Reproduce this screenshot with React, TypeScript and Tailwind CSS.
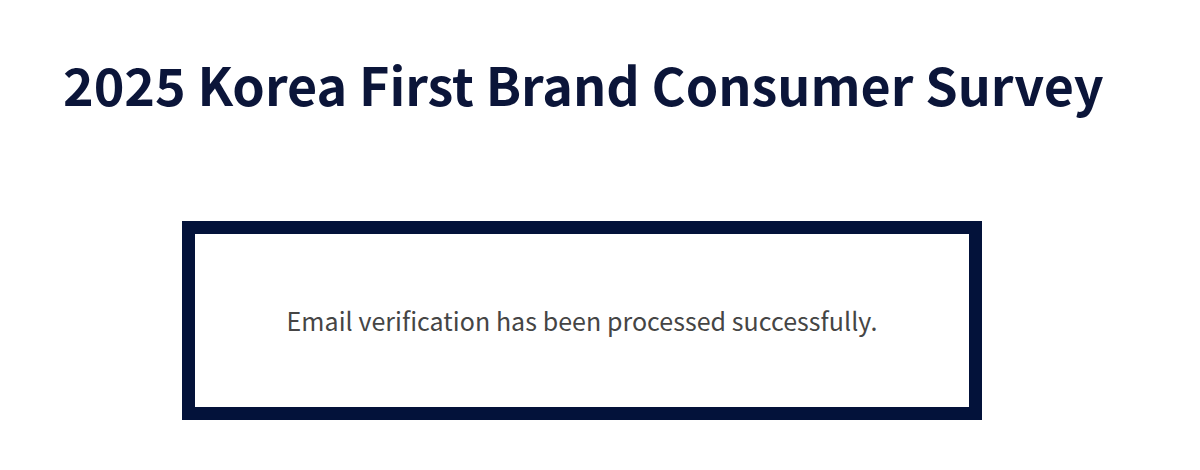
import React from 'react';

const App: React.FC = () => {
  return (
    <div className="w-[1200px] h-[470px] bg-white font-['Noto_Sans_CJK_KR','Noto_Sans',sans-serif]">
      <div className="pl-[63px] pt-[48px]">
        <h1 className="text-[52px] leading-[72px] font-bold text-[#0b1539]">
          2025 Korea First Brand Consumer Survey
        </h1>
      </div>
      <div className="ml-[182px] mt-[101px] w-[800px] h-[199px] border-[13px] border-[#03123a] flex items-center justify-center">
        <p className="text-[25px] text-[#454545] tracking-[0.05px]">
          Email verification has been processed successfully.
        </p>
      </div>
    </div>
  );
};

export default App;
